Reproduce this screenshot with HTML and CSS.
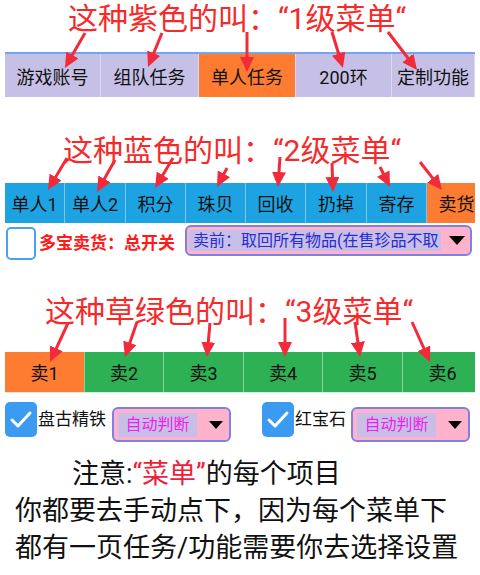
FILE: index.html
```html
<!DOCTYPE html>
<html lang="zh-CN">
<head>
    <meta charset="UTF-8">
    <meta name="viewport" content="width=device-width, initial-scale=1.0">
    <title>菜单说明</title>
    <link rel="stylesheet" href="styles.css">
</head>
<body>
    <div class="page">
        <h2 class="title t1">这种紫色的叫：“1级菜单“</h2>
        <nav class="menu menu-1">
            <div class="menu-item w96">游戏账号</div>
            <div class="menu-item w98">组队任务</div>
            <div class="menu-item w97 active">单人任务</div>
            <div class="menu-item w96">200环</div>
            <div class="menu-item w83">定制功能</div>
        </nav>

        <h2 class="title t2">这种蓝色的叫：“2级菜单“</h2>
        <nav class="menu menu-2">
            <div class="menu-item w60">单人1</div>
            <div class="menu-item w61">单人2</div>
            <div class="menu-item w60">积分</div>
            <div class="menu-item w60">珠贝</div>
            <div class="menu-item w60">回收</div>
            <div class="menu-item w61">扔掉</div>
            <div class="menu-item w60">寄存</div>
            <div class="menu-item w60 active">卖货</div>
        </nav>
        <div class="opt-row r2">
            <span class="check"></span>
            <span class="master">多宝卖货：总开关</span>
            <div class="select wide">
                <span class="sel-text blue">卖前：取回所有物品(在售珍品不取</span>
                <span class="caret"></span>
            </div>
        </div>

        <h2 class="title t3">这种草绿色的叫：“3级菜单“</h2>
        <nav class="menu menu-3">
            <div class="menu-item w80 active">卖1</div>
            <div class="menu-item w79">卖2</div>
            <div class="menu-item w80">卖3</div>
            <div class="menu-item w79">卖4</div>
            <div class="menu-item w80">卖5</div>
            <div class="menu-item w80">卖6</div>
        </nav>
        <div class="opt-row r3">
            <div class="opt-group g1">
                <span class="check on">
                    <svg viewBox="0 0 32 35" width="32" height="35"><polyline points="7,18 13,24 25,11" /></svg>
                </span>
                <span class="opt-label">盘古精铁</span>
                <div class="select small">
                    <span class="sel-text pink">自动判断</span>
                    <span class="caret"></span>
                </div>
            </div>
            <div class="opt-group g2">
                <span class="check on">
                    <svg viewBox="0 0 32 35" width="32" height="35"><polyline points="7,18 13,24 25,11" /></svg>
                </span>
                <span class="opt-label">红宝石</span>
                <div class="select small">
                    <span class="sel-text pink">自动判断</span>
                    <span class="caret"></span>
                </div>
            </div>
        </div>

        <div class="note">
            <p class="note-line first">注意:<span class="hl">“菜单”</span>的每个项目</p>
            <p class="note-line">你都要去手动点下，因为每个菜单下</p>
            <p class="note-line">都有一页任务/功能需要你去选择设置</p>
        </div>

        <!-- стрелки поверх всего -->
        <svg class="arrows" width="480" height="575" viewBox="0 0 480 575">
            <defs>
                <marker id="head" viewBox="0 0 15 14" refX="10" refY="7" markerWidth="15" markerHeight="14" markerUnits="userSpaceOnUse" orient="auto">
                    <path d="M0,0 L15,7 L0,14 Z" fill="#f22a3a" />
                </marker>
            </defs>
            <g stroke="#f22a3a" stroke-width="3" marker-end="url(#head)">
                <line x1="85" y1="33" x2="67.4" y2="63.6" />
                <line x1="162" y1="33" x2="149.9" y2="62.4" />
                <line x1="247" y1="32" x2="247" y2="67" />
                <line x1="332" y1="32" x2="341.5" y2="63.2" />
                <line x1="388" y1="32" x2="414" y2="66" />

                <line x1="67" y1="158" x2="50.5" y2="185.7" />
                <line x1="115" y1="160" x2="99.5" y2="187.6" />
                <line x1="173" y1="158" x2="157.6" y2="183.7" />
                <line x1="227" y1="168" x2="219.3" y2="182.6" />
                <line x1="280" y1="157" x2="278.3" y2="182" />
                <line x1="332" y1="163" x2="332.8" y2="187" />
                <line x1="380" y1="167" x2="387.8" y2="182.5" />
                <line x1="420" y1="162" x2="438.9" y2="186.1" />

                <line x1="68" y1="323" x2="52.1" y2="357.5" />
                <line x1="137" y1="322" x2="126.6" y2="352.3" />
                <line x1="210" y1="323" x2="207.4" y2="352" />
                <line x1="285" y1="318" x2="285" y2="352" />
                <line x1="355" y1="322" x2="359.3" y2="352" />
                <line x1="412" y1="322" x2="428" y2="357.4" />
            </g>
        </svg>
    </div>
</body>
</html>
```

FILE: styles.css
```css
body {
    margin: 0;
    padding: 0;
    background: #fff;
    font-family: Roboto, "Noto Sans CJK SC", sans-serif;
    color: #111;
}
.page {
    position: relative;
    width: 480px;
    height: 575px;
    overflow: hidden;
}

/* заголовки */
.title {
    margin: 0;
    font-size: 30px;
    font-weight: normal;
    line-height: 37px;
    color: #f52a2a;
    white-space: nowrap;
}
.t1 {
    padding-left: 68px;
    margin-bottom: 15px;
}
.t2 {
    padding-left: 63px;
    margin-top: 35px;
    margin-bottom: 14px;
}
.t3 {
    padding-left: 45px;
    margin-top: 33px;
    margin-bottom: 22px;
}

/* полосы меню */
.menu {
    display: flex;
    margin: 0 5px;
    overflow: hidden;
}
.menu-item {
    flex: 0 0 auto;
    box-sizing: border-box;
    display: flex;
    align-items: center;
    justify-content: center;
    font-size: 18px;
    white-space: nowrap;
    color: #111;
}
.menu-1 {
    height: 45px;
    border-top: 2px solid #72a6ef;
    box-sizing: border-box;
    background-color: #c6c0e6;
}
.menu-1 .menu-item {
    border-right: 1px solid #dcd8f1;
}
.menu-2 {
    height: 40px;
    background-color: #1ea3e2;
}
.menu-2 .menu-item {
    border-right: 1px solid #7cc6ec;
}
.menu-3 {
    height: 41px;
    background-color: #2eb055;
    border-bottom: 1px solid #d6efdc;
    box-sizing: border-box;
}
.menu-3 .menu-item {
    border-right: 1px solid #86d49d;
}
.menu .active {
    background-color: #fe7c32;
}
.w60 { width: 60px; }
.w61 { width: 61px; }
.w79 { width: 79px; }
.w80 { width: 80px; }
.w83 { width: 83px; }
.w96 { width: 96px; }
.w97 { width: 97px; }
.w98 { width: 98px; }

/* строки с опциями */
.opt-row {
    display: flex;
    align-items: flex-start;
    box-sizing: border-box;
}
.r2 {
    height: 37px;
    padding: 2px 0 0 6px;
}
.r3 {
    height: 49px;
    padding: 9px 0 0 5px;
}
.opt-group {
    display: flex;
    align-items: flex-start;
}
.g2 {
    margin-left: 31px;
}
.check {
    flex: 0 0 auto;
    box-sizing: border-box;
    width: 30px;
    height: 33px;
    margin-top: 2px;
    border: 2px solid #4aa2ef;
    border-radius: 5px;
    background: #fff;
}
.check.on {
    width: 32px;
    height: 35px;
    margin-top: 0;
    border: none;
    background-color: #3b9bf1;
}
.check svg {
    display: block;
}
.check polyline {
    fill: none;
    stroke: #fff;
    stroke-width: 3;
    stroke-linecap: round;
    stroke-linejoin: round;
}
.master {
    margin-left: 3px;
    font-size: 17px;
    font-weight: bold;
    line-height: 33px;
    margin-top: 2px;
    color: #ff1a1a;
    white-space: nowrap;
}
.opt-label {
    margin-left: 1px;
    font-size: 17px;
    line-height: 35px;
    white-space: nowrap;
}

/* выпадающие списки */
.select {
    box-sizing: border-box;
    display: flex;
    align-items: center;
    border: 2px solid #7f80e6;
    border-radius: 6px;
    background-color: #ffb2cc;
}
.select.wide {
    width: 287px;
    height: 31px;
    margin-left: 10px;
    padding-left: 2px;
}
.select.small {
    width: 119px;
    height: 35px;
    margin-top: 5px;
    padding-left: 4px;
}
.g1 .select.small {
    margin-left: 6px;
}
.g2 .select.small {
    margin-left: 5px;
}
.sel-text {
    background-color: #c7bfe6;
    white-space: nowrap;
    font-size: 16px;
}
.sel-text.blue {
    height: 21px;
    line-height: 21px;
    padding: 0 3px 0 4px;
    color: #2a2ad6;
}
.sel-text.pink {
    width: 79px;
    height: 24px;
    line-height: 24px;
    text-align: center;
    color: #f020ee;
}
.caret {
    margin-left: auto;
    margin-right: 5px;
    width: 0;
    height: 0;
    border-left: 8px solid transparent;
    border-right: 8px solid transparent;
    border-top: 9px solid #000;
}
.select.small .caret {
    margin-right: 6px;
    border-left-width: 7px;
    border-right-width: 7px;
    border-top-width: 8px;
}

/* пояснение внизу */
.note {
    margin-top: 14px;
}
.note-line {
    margin: 0;
    padding-left: 15px;
    font-size: 27px;
    line-height: 37px;
    white-space: nowrap;
    color: #111;
}
.note-line.first {
    padding-left: 72px;
}
.hl {
    color: #f0203a;
}

.arrows {
    position: absolute;
    top: 0;
    left: 0;
    pointer-events: none;
}
```
